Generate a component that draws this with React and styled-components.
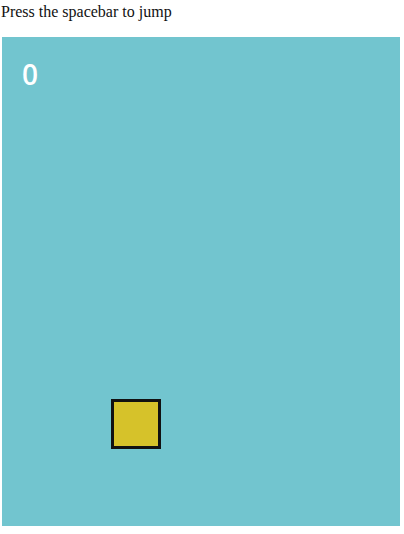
import React from "react";
import styled, { createGlobalStyle } from "styled-components";

const Global = createGlobalStyle`
  html, body { margin: 0; padding: 0; background: #ffffff; }
  body { font-family: "Liberation Serif", "Times New Roman", serif; }
`;

const Page = styled.div`
  display: flex;
  flex-direction: column;
  padding: 0 4px 0 2px;
`;

const Hint = styled.p`
  margin: 0;
  padding: 3px 0 0 0;
  margin-left: -1px;
  height: 37px;
  box-sizing: border-box;
  font-size: 16px;
  line-height: 18px;
  color: #111;
`;

const Stage = styled.div`
  position: relative;
  width: 398px;
  height: 489px;
  background: #72c5cf;
`;

const Score = styled.div`
  position: absolute;
  left: 20px;
  top: 20px;
  font-family: "Open Sans", "Liberation Sans", sans-serif;
  font-size: 28px;
  font-weight: 600;
  line-height: 34px;
  color: #ffffff;
`;

const Player = styled.div`
  position: absolute;
  left: ${(p) => p.$x}px;
  top: ${(p) => p.$y}px;
  width: 50px;
  height: 50px;
  box-sizing: border-box;
  border: 3px solid #111;
  background: #d6c22a;
`;

export default function App() {
  return (
    <>
      <Global />
      <Page>
        <Hint>Press the spacebar to jump</Hint>
        <Stage>
          <Score>0</Score>
          <Player $x={109} $y={362} />
        </Stage>
      </Page>
    </>
  );
}
